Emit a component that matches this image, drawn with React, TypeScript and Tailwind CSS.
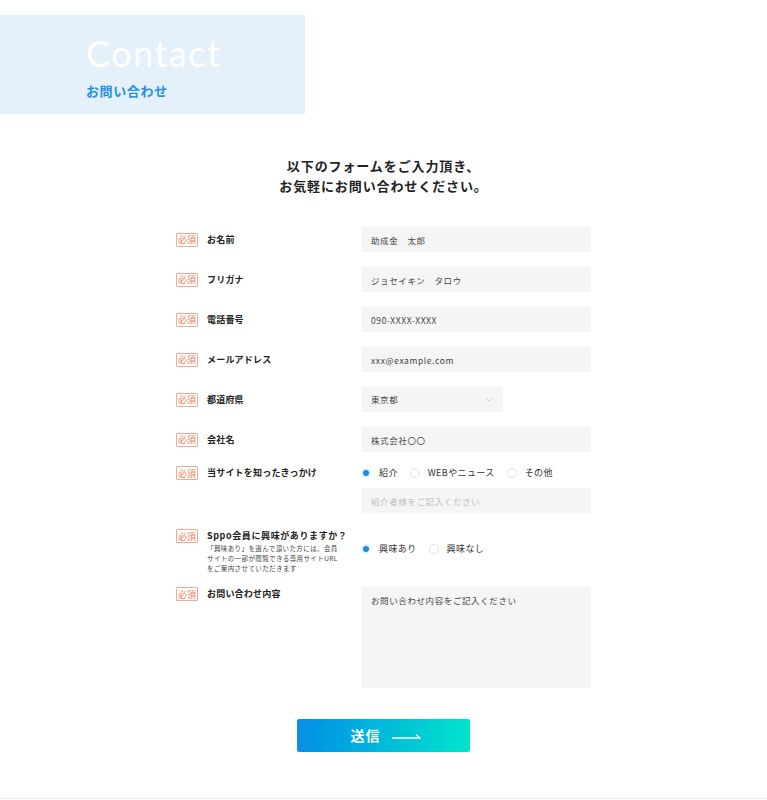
import { ChevronDown } from 'lucide-react';

const jp = "font-['Noto_Sans_CJK_JP','Noto_Sans',sans-serif]";

const Badge = () => (
  <span className="flex h-[14px] w-[22px] shrink-0 items-center justify-center rounded-[1px] border border-[#f6a98d] text-[9px] leading-none text-[#f07c55]">
    必須
  </span>
);

const Label = ({ text }: { text: string }) => (
  <div className="flex items-center gap-[9px]">
    <Badge />
    <span className="text-[9px] font-bold tracking-[0.2px] text-[#222]">{text}</span>
  </div>
);

const Radio = ({ label, checked }: { label: string; checked?: boolean }) => (
  <label className="flex items-center gap-[8px]">
    {checked ? (
      <span className="flex h-[10px] w-[10px] items-center justify-center rounded-full bg-[#e6f2fc]">
        <span className="h-[6px] w-[6px] rounded-full bg-[#1d8ae6]" />
      </span>
    ) : (
      <span className="h-[10px] w-[10px] rounded-full border border-[#e2e2e2] bg-white" />
    )}
    <span className="text-[9px] tracking-[0.4px] text-[#333]">{label}</span>
  </label>
);

const TextRow = ({ label, value }: { label: string; value: string }) => (
  <div className="flex h-[25px] items-center">
    <div className="w-[186px]">
      <Label text={label} />
    </div>
    <input
      readOnly
      value={value}
      className="h-[25px] w-[229px] bg-[#f5f5f5] px-[9px] text-[8.5px] tracking-[0.6px] text-[#444] outline-none"
    />
  </div>
);

export default function App() {
  return (
    <div className={`${jp} min-h-[800px] bg-white`}>
      <div className="pt-[15px]">
        <div className="flex h-[99px] w-[305px] flex-col bg-[#e4f1fb] pl-[86px] pt-[18px]">
          <h1 className="font-['Lato',sans-serif] text-[36px] font-normal leading-[40px] tracking-[1.5px] text-white">
            Contact
          </h1>
          <p className="mt-[10px] text-[13px] font-bold leading-[16px] tracking-[0.6px] text-[#2590e3]">
            お問い合わせ
          </p>
        </div>
      </div>

      <p className="mt-[42px] text-center text-[13px] font-bold leading-[20px] tracking-[0.9px] text-[#222]">
        以下のフォームをご入力頂き、
        <br />
        お気軽にお問い合わせください。
      </p>

      <form className="mx-auto mt-[31px] flex w-[415px] flex-col">
        <div className="flex flex-col gap-[15px]">
          <TextRow label="お名前" value="助成金　太郎" />
          <TextRow label="フリガナ" value="ジョセイキン　タロウ" />
          <TextRow label="電話番号" value="090-XXXX-XXXX" />
          <TextRow label="メールアドレス" value="xxx@example.com" />
          <div className="flex h-[25px] items-center">
            <div className="w-[186px]">
              <Label text="都道府県" />
            </div>
            <div className="flex h-[25px] w-[141px] items-center justify-between bg-[#f5f5f5] pl-[9px] pr-[9px]">
              <span className="text-[8.5px] tracking-[0.6px] text-[#444]">東京都</span>
              <ChevronDown className="h-[10px] w-[10px] text-[#aaa]" strokeWidth={1.5} />
            </div>
          </div>
          <TextRow label="会社名" value="株式会社〇〇" />
        </div>

        <div className="mt-[14px] flex">
          <div className="w-[186px]">
            <Label text="当サイトを知ったきっかけ" />
          </div>
          <div className="flex flex-col">
            <div className="-ml-[1px] flex h-[14px] items-center gap-[12px]">
              <Radio label="紹介" checked />
              <Radio label="WEBやニュース" />
              <Radio label="その他" />
            </div>
            <input
              readOnly
              placeholder="紹介者様をご記入ください"
              className="mt-[8px] h-[25px] w-[229px] bg-[#f5f5f5] px-[9px] text-[8.5px] tracking-[0.6px] text-[#444] outline-none placeholder:text-[#bdbdbd]"
            />
          </div>
        </div>

        <div className="mt-[16px] flex">
          <div className="flex w-[186px] gap-[9px]">
            <Badge />
            <div className="flex flex-col">
              <span className="text-[9px] font-bold leading-[13px] tracking-[0.6px] text-[#222]">
                Sppo会員に興味がありますか？
              </span>
              <span className="mt-[1px] text-[6.5px] leading-[10px] tracking-[0.4px] text-[#444]">
                「興味あり」を選んで頂いた方には、会員
                <br />
                サイトの一部が閲覧できる専用サイトURL
                <br />
                をご案内させていただきます
              </span>
            </div>
          </div>
          <div className="-ml-[1px] mt-[13px] flex h-[14px] items-center gap-[12px]">
            <Radio label="興味あり" checked />
            <Radio label="興味なし" />
          </div>
        </div>

        <div className="mt-[14px] flex">
          <div className="w-[186px]">
            <Label text="お問い合わせ内容" />
          </div>
          <textarea
            readOnly
            placeholder="お問い合わせ内容をご記入ください"
            className="h-[101px] w-[229px] resize-none bg-[#f5f5f5] px-[9px] pt-[6px] text-[8.5px] leading-[14px] tracking-[0.6px] text-[#444] outline-none placeholder:text-[#444]"
          />
        </div>

        <button
          type="button"
          className="mx-auto mt-[31px] flex h-[33px] w-[173px] items-center justify-center gap-[11px] rounded-[2px] bg-gradient-to-r from-[#0a8ee6] to-[#02e4cb] pl-[4px]"
        >
          <span className="text-[14px] font-bold tracking-[1px] text-white">送信</span>
          <svg width="29" height="6" viewBox="0 0 29 6" className="mt-[1px]">
            <path d="M0 5 H28 L24 1.5" stroke="white" strokeWidth="1.3" fill="none" />
          </svg>
        </button>
      </form>

      <div className="mt-[46px] h-px w-full bg-[#e8edf2]" />
    </div>
  );
}
